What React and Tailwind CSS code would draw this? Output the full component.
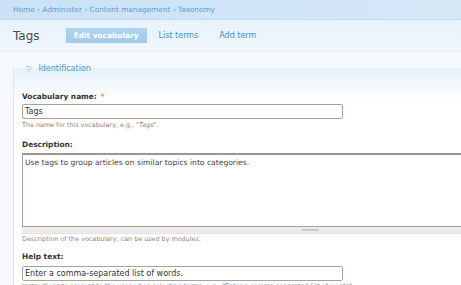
import React from "react";

export default function App() {
  return (
    <div
      className="w-[461px] h-[285px] overflow-hidden bg-[#f5f9fd]"
      style={{ fontFamily: '"DejaVu Sans", Verdana, sans-serif' }}
    >
      <div className="h-[20px] bg-gradient-to-r from-[#cbe1f5] to-[#d4e8f8] border-b border-[#c4dcf2] flex items-center pl-[13px] text-[7.35px] text-[#5d9dd8] whitespace-nowrap">
        Home › Administer › Content management › Taxonomy
      </div>
      <div className="h-[32px] bg-gradient-to-b from-[#e8f2fb] to-[#eff6fc] border-b border-[#e6f0f9] flex items-center pl-[13px] whitespace-nowrap">
        <span className="text-[12px] text-[#4a4a4a] leading-none">Tags</span>
        <span className="ml-[26px] h-[15px] w-[81px] flex items-center justify-center bg-gradient-to-b from-[#afd4ed] to-[#a2cbe8] text-white font-bold text-[7.4px]">
          Edit vocabulary
        </span>
        <span className="ml-[12px] text-[8px] text-[#3c92d6]">List terms</span>
        <span className="ml-[21px] text-[8px] text-[#3c92d6]">Add term</span>
      </div>
      <div className="pt-[16px] pl-[13px]">
        <div className="relative border-l border-[#dbe8f4] bg-gradient-to-b from-[#e7f1fa] via-white via-[35px] to-white pl-[8px] pt-[24px]">
          <div className="absolute left-[10px] top-[-4px] flex items-center h-[10px] px-[2px] whitespace-nowrap">
            <span className="text-[7px] text-[#a0a8b0] leading-none">▽</span>
            <span className="ml-[7px] text-[8px] text-[#4598d8] leading-none">Identification</span>
          </div>

          <div className="h-[10px] flex items-center text-[7.4px] font-bold text-[#333] whitespace-nowrap">
            Vocabulary name:<span className="ml-[4px] text-[#eaa233]">*</span>
          </div>
          <div className="mt-[2px] w-[321px] h-[15px] border border-[#a8a198] rounded-[2px] bg-white flex items-center pl-[2px] text-[8px] text-[#333]">
            Tags
          </div>
          <div className="mt-[3px] h-[8px] flex items-center text-[6.4px] text-[#888888] whitespace-nowrap">
            The name for this vocabulary, e.g., "<i>Tags</i>".
          </div>

          <div className="mt-[10px] h-[10px] flex items-center text-[7.4px] font-bold text-[#333] whitespace-nowrap">
            Description:
          </div>
          <div className="mt-[3px] w-[460px]">
            <div className="h-[74px] border border-[#a8a198] border-t-2 border-t-[#9d968d] bg-white pl-[2px] pt-[2px] text-[7.6px] text-[#444] whitespace-nowrap">
              Use tags to group articles on similar topics into categories.
            </div>
            <div className="h-[7px] bg-[#ececec] border-b border-[#e2e2e2] flex items-center pl-[280px]">
              <div className="w-[17px] h-[2px] bg-[#c9c9c9]" />
            </div>
          </div>
          <div className="mt-[2px] h-[8px] flex items-center text-[6.4px] text-[#888888] whitespace-nowrap">
            Description of the vocabulary; can be used by modules.
          </div>

          <div className="mt-[8px] h-[10px] flex items-center text-[7.4px] font-bold text-[#333] whitespace-nowrap">
            Help text:
          </div>
          <div className="mt-[4px] w-[321px] h-[15px] border border-[#a8a198] rounded-[2px] bg-white flex items-center pl-[2px] text-[8px] text-[#333] whitespace-nowrap">
            Enter a comma-separated list of words.
          </div>
          <div className="mt-[2px] h-[8px] flex items-center text-[6.4px] text-[#888888] whitespace-nowrap">
            Instructions to present to the user when selecting terms, e.g., "Enter a comma separated list of words".
          </div>
        </div>
      </div>
    </div>
  );
}
